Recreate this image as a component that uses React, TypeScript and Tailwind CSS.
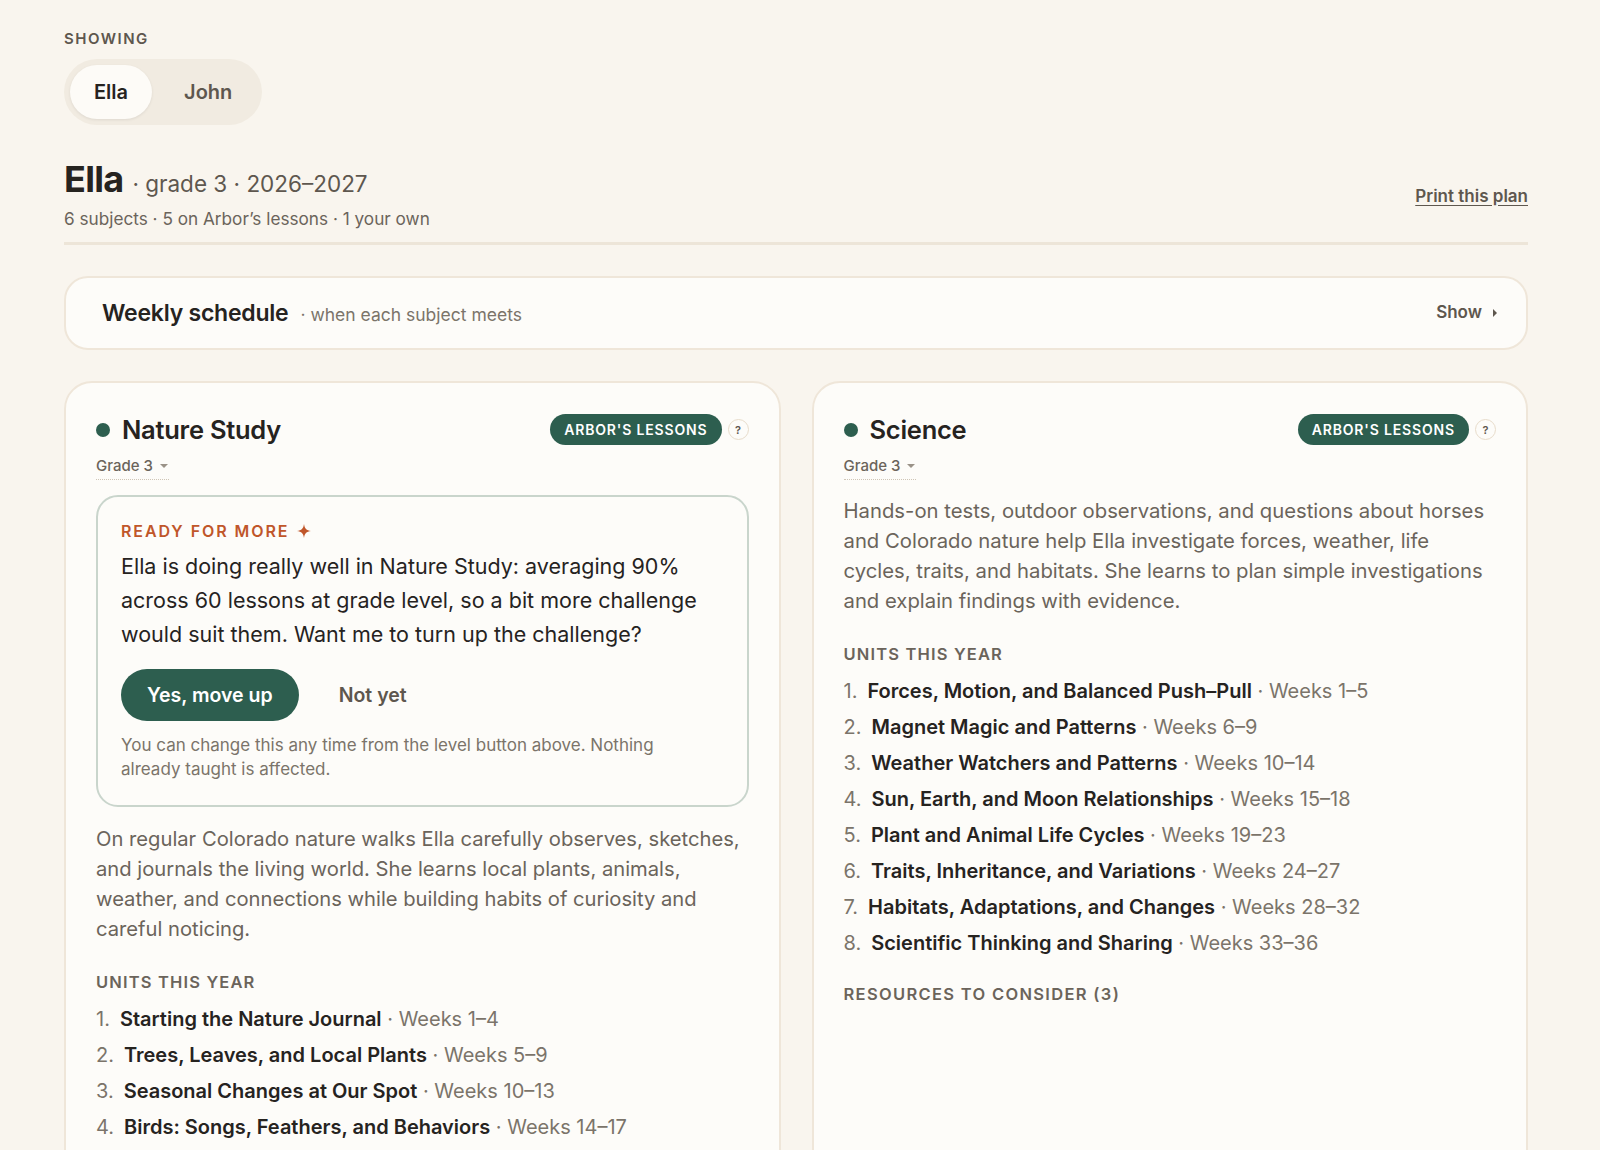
type Unit = { title: string; weeks: string };

const natureUnits: Unit[] = [
  { title: "Starting the Nature Journal", weeks: "Weeks 1–4" },
  { title: "Trees, Leaves, and Local Plants", weeks: "Weeks 5–9" },
  { title: "Seasonal Changes at Our Spot", weeks: "Weeks 10–13" },
  { title: "Birds: Songs, Feathers, and Behaviors", weeks: "Weeks 14–17" },
];

const scienceUnits: Unit[] = [
  { title: "Forces, Motion, and Balanced Push–Pull", weeks: "Weeks 1–5" },
  { title: "Magnet Magic and Patterns", weeks: "Weeks 6–9" },
  { title: "Weather Watchers and Patterns", weeks: "Weeks 10–14" },
  { title: "Sun, Earth, and Moon Relationships", weeks: "Weeks 15–18" },
  { title: "Plant and Animal Life Cycles", weeks: "Weeks 19–23" },
  { title: "Traits, Inheritance, and Variations", weeks: "Weeks 24–27" },
  { title: "Habitats, Adaptations, and Changes", weeks: "Weeks 28–32" },
  { title: "Scientific Thinking and Sharing", weeks: "Weeks 33–36" },
];

function SubjectHeader({ name }: { name: string }) {
  return (
    <div>
      <div className="flex items-center justify-between">
        <div className="flex items-center gap-3">
          <span className="w-[14px] h-[14px] rounded-full bg-[#2d5e4f]" />
          <h3 className="text-[25.5px] font-semibold tracking-[-0.01em] text-[#26231f] leading-tight">{name}</h3>
        </div>
        <div className="flex items-center gap-[6px]">
          <span className="h-[31px] px-[14px] rounded-full bg-[#2d5e4f] text-white text-[14px] font-semibold tracking-[0.06em] flex items-center">
            ARBOR'S LESSONS
          </span>
          <span className="w-[21px] h-[21px] rounded-full border border-[#e8dccb] text-[11px] font-semibold text-[#5e574e] flex items-center justify-center">
            ?
          </span>
        </div>
      </div>
      <button className="mt-[9px] flex items-center gap-1 text-[15px] font-medium text-[#6b645b] border-b border-dotted border-[#cfc5b6] pb-[2px]">
        Grade 3
        <svg width="10" height="6" viewBox="0 0 10 6" className="ml-[2px]">
          <path d="M1 1 L5 5 L9 1 Z" fill="#9a9288" />
        </svg>
      </button>
    </div>
  );
}

function UnitList({ units }: { units: Unit[] }) {
  return (
    <>
      <h4 className="mt-[26px] text-[16.5px] font-semibold tracking-[0.07em] text-[#6b645b]">UNITS THIS YEAR</h4>
      <ol className="mt-[11px] flex flex-col gap-[10px]">
        {units.map((u, i) => (
          <li key={u.title} className="text-[20px] leading-[26px] text-[#26231f]">
            <span className="text-[#7b746a] mr-[10px]">{i + 1}.</span>
            <span className="font-semibold">{u.title}</span>
            <span className="text-[#7b746a]"> · {u.weeks}</span>
          </li>
        ))}
      </ol>
    </>
  );
}

export default function App() {
  return (
    <div className="min-h-screen bg-[#f9f5ee] text-[#26231f]" style={{ fontFamily: "Inter, 'Noto Sans', sans-serif" }}>
      <div className="pl-16 pr-[72px] pt-[28px] pb-10">
        <div className="text-[15px] font-semibold tracking-[0.1em] text-[#5e574e]">SHOWING</div>
        <div className="mt-[8px] inline-flex items-center gap-[8px] p-[6px] rounded-full bg-[#f1ebe1]">
          <button className="h-[54px] px-[24px] rounded-full bg-[#fdfbf7] shadow-[0_1px_3px_rgba(0,0,0,0.08)] text-[20px] font-semibold text-[#26231f]">
            Ella
          </button>
          <button className="h-[54px] px-[24px] rounded-full text-[20px] font-semibold text-[#5e574e]">John</button>
        </div>

        <div className="mt-[36px] flex items-center justify-between border-b-[3px] border-[#ede5d8] pb-[10px]">
          <div>
            <div className="flex items-baseline gap-[9px]">
              <span className="text-[36px] font-bold tracking-[-0.02em] leading-none">Ella</span>
              <span className="text-[22.5px] text-[#5e574e]">· grade 3 · 2026–2027</span>
            </div>
            <div className="mt-[6px] text-[17.2px] text-[#6b645b]">6 subjects · 5 on Arbor’s lessons · 1 your own</div>
          </div>
          <a className="text-[17px] font-semibold text-[#5e574e] underline underline-offset-[3px]">Print this plan</a>
        </div>

        <div className="mt-[31px] h-[74px] rounded-[24px] border-2 border-[#efe6d9] bg-[#fdfcf9] flex items-center justify-between pl-[36px] pr-[28px]">
          <div className="flex items-baseline gap-[12px]">
            <span className="text-[23px] font-semibold tracking-[-0.01em]">Weekly schedule</span>
            <span className="text-[17.5px] text-[#7b746a]">· when each subject meets</span>
          </div>
          <button className="flex items-center gap-[10px] text-[17px] font-semibold text-[#5e574e]">
            Show
            <svg width="6" height="10" viewBox="0 0 6 10">
              <path d="M1 1 L5 5 L1 9 Z" fill="#5e574e" />
            </svg>
          </button>
        </div>

        <div className="mt-[31px] grid grid-cols-2 gap-[31px]">
          <div className="rounded-[28px] border-2 border-[#efe6d9] bg-[#fdfcf9] px-[30px] pt-[31px] pb-8">
            <SubjectHeader name="Nature Study" />
            <div className="mt-[15px] rounded-[22px] border-2 border-[#c9d5cc] px-[23px] pt-[22px] pb-[24px]">
              <div className="flex items-center gap-[8px] text-[16px] font-semibold tracking-[0.12em] text-[#c0562a]">
                READY FOR MORE
                <svg width="14" height="14" viewBox="0 0 14 14">
                  <path d="M7 0 C7.6 4.6 9.4 6.4 14 7 C9.4 7.6 7.6 9.4 7 14 C6.4 9.4 4.6 7.6 0 7 C4.6 6.4 6.4 4.6 7 0 Z" fill="#c0562a" />
                </svg>
              </div>
              <p className="mt-[6px] text-[21.5px] leading-[34px] text-[#26231f]">
                Ella is doing really well in Nature Study: averaging 90% across 60 lessons at grade level, so a bit more challenge would suit them. Want me to turn up the challenge?
              </p>
              <div className="mt-[18px] flex items-center gap-[16px]">
                <button className="h-[52px] px-[26px] rounded-full bg-[#2d5e4f] text-white text-[19.5px] font-semibold">Yes, move up</button>
                <button className="h-[52px] px-[24px] rounded-full text-[19.5px] font-semibold text-[#5e574e]">Not yet</button>
              </div>
              <p className="mt-[12px] pr-[40px] text-[17px] leading-[24px] text-[#7b746a]">
                You can change this any time from the level button above. Nothing already taught is affected.
              </p>
            </div>
            <p className="mt-[17px] text-[20.2px] leading-[30px] text-[#6b645b]">
              On regular Colorado nature walks Ella carefully observes, sketches, and journals the living world. She learns local plants, animals, weather, and connections while building habits of curiosity and careful noticing.
            </p>
            <UnitList units={natureUnits} />
          </div>

          <div className="rounded-[28px] border-2 border-[#efe6d9] bg-[#fdfcf9] px-[30px] pt-[31px] pb-8 self-start">
            <SubjectHeader name="Science" />
            <p className="mt-[16px] text-[20.3px] leading-[30px] text-[#6b645b]">
              Hands-on tests, outdoor observations, and questions about horses and Colorado nature help Ella investigate forces, weather, life cycles, traits, and habitats. She learns to plan simple investigations and explain findings with evidence.
            </p>
            <UnitList units={scienceUnits} />
            <button className="mt-[26px] text-[16.5px] font-semibold tracking-[0.08em] text-[#6b645b]">
              RESOURCES TO CONSIDER (3)
            </button>
            <div className="h-[140px]" />
          </div>
        </div>
      </div>
    </div>
  );
}
